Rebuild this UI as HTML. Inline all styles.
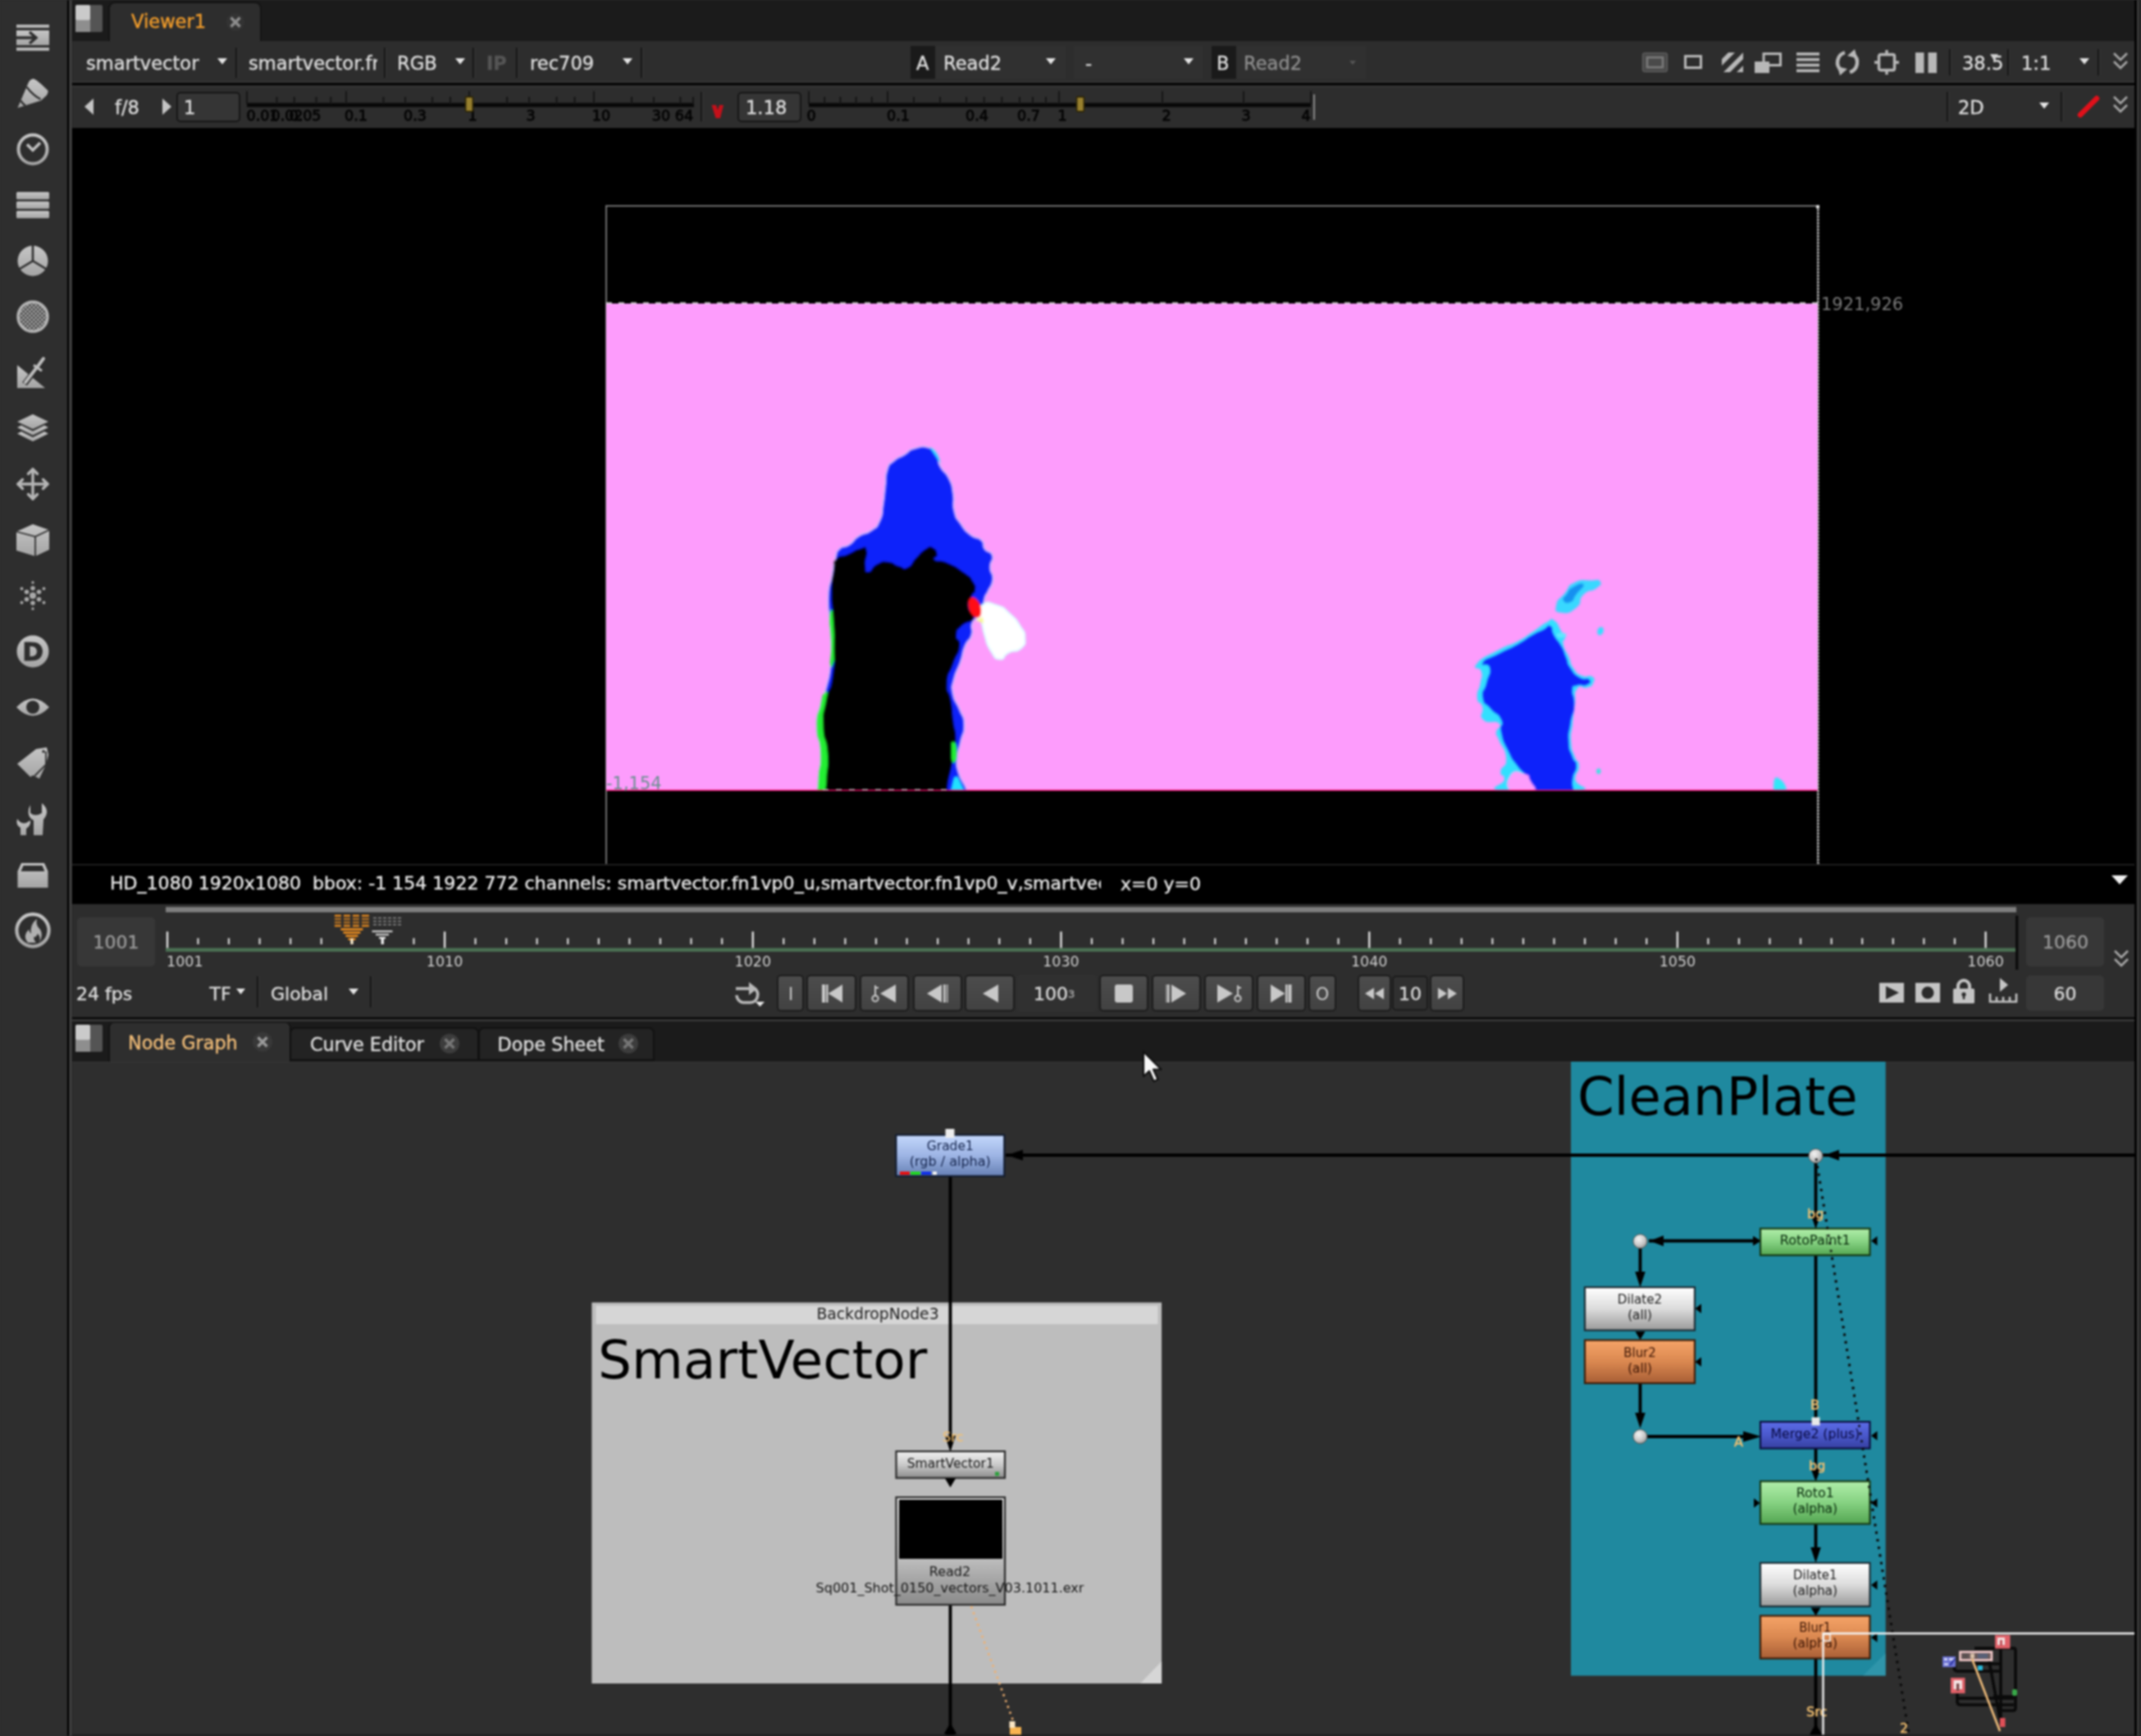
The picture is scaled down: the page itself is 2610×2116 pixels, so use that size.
<!DOCTYPE html>
<html>
<head>
<meta charset="utf-8">
<title>Nuke</title>
<style>
html,body{margin:0;padding:0;background:#2e2e2e;}
body{width:2610px;height:2116px;overflow:hidden;position:relative;font-family:"DejaVu Sans","Liberation Sans",sans-serif;font-size:22px;color:#dcdcdc;}
#root{position:absolute;left:0;top:0;width:2610px;height:2116px;overflow:hidden;background:transparent;filter:blur(0.8px);}
.abs{position:absolute;}
.t{position:absolute;white-space:nowrap;line-height:1;-webkit-text-stroke:0.4px currentColor;}
svg{position:absolute;overflow:visible;}
/* left toolbar */
#ltb{left:0;top:0;width:82px;height:2116px;background:#2e2e2e;}
#lsep{left:81.8px;top:0;width:2.2px;height:2116px;background:#000;}
#lsep2{left:84.6px;top:0;width:2px;height:2116px;background:#444;}
/* viewer panel */
#vtabbar{left:88px;top:0;width:2514px;height:50px;background:#1b1b1b;}
#vtab{left:134px;top:4px;width:183px;height:48px;background:#2d2d2d;border-radius:6px 6px 0 0;box-shadow:0 0 0 2px #141414;}
#row1{left:88px;top:49.5px;width:2514px;height:52px;background:#2d2d2d;}
#rowsep{left:88px;top:101px;width:2514px;height:2.7px;background:#030303;box-shadow:0 -2.5px 0 #333,0 2.5px 0 #343434;z-index:1;}
#row2{left:88px;top:104px;width:2514px;height:52px;background:#2d2d2d;}
#viewer{left:88px;top:156px;width:2514px;height:897px;background:#000;}
#status{left:88px;top:1053px;width:2514px;height:49px;background:#000;border-top:2px solid #1e1e1e;box-sizing:border-box;}
#tl{left:88px;top:1102px;width:2514px;height:138px;background:#2d2d2d;}
#tlsep{left:88px;top:1239.6px;width:2514px;height:2.8px;background:#020202;box-shadow:0 2.6px 0 #3a3a3a;}
/* node graph panel */
#ntabbar{left:88px;top:1245px;width:2514px;height:49px;background:#1b1b1b;}
#ng{left:88px;top:1294px;width:2514px;height:822px;background:#2e2e2e;overflow:hidden;border-top:1.5px solid #363636;box-sizing:border-box;}
#rstrip{left:2602.4px;top:0;width:8px;height:2116px;background:linear-gradient(90deg,#020202 0,#020202 2.6px,#404040 2.6px,#404040 5.2px,#262626 5.2px);}
.vsep{position:absolute;width:2px;background:#151515;box-shadow:1px 0 0 #3a3a3a;}
</style>
</head>
<body>
<div id="root">
<div id="ltb" class="abs"></div>
<div id="lsep" class="abs"></div>
<div id="lsep2" class="abs"></div>
<div id="vtabbar" class="abs"></div>
<div id="vtab" class="abs"></div>
<div id="row1" class="abs"></div>
<div id="rowsep" class="abs"></div>
<div id="row2" class="abs"></div>
<div id="viewer" class="abs"></div>
<div id="status" class="abs"></div>
<div id="tl" class="abs"></div>
<div id="tlsep" class="abs"></div>
<div id="ntabbar" class="abs"></div>
<div id="ng" class="abs"></div>
<div id="rstrip" class="abs"></div>
<!--LEFTICONS-->
<svg width="0" height="0" style="position:absolute"><defs>
<linearGradient id="ig" x1="0" y1="0" x2="0" y2="1"><stop offset="0" stop-color="#c6c6c6"/><stop offset="1" stop-color="#a4a4a4"/></linearGradient>
<pattern id="chk" width="5" height="5" patternUnits="userSpaceOnUse"><rect width="5" height="5" fill="#b0b0b0"/><rect width="2.5" height="2.5" fill="#3c3c3c"/><rect x="2.5" y="2.5" width="2.5" height="2.5" fill="#3c3c3c"/></pattern>
</defs></svg>
<!-- 1 Image -->
<svg style="left:20px;top:26px" width="40" height="40" viewBox="0 0 40 40"><g fill="url(#ig)"><rect x="0" y="4" width="40" height="4"/><rect x="0" y="11" width="40" height="18"/><rect x="0" y="32" width="40" height="4"/></g><path d="M0 20 H22 M16 13 L24 20 L16 27" fill="none" stroke="#2e2e2e" stroke-width="3.4"/></svg>
<!-- 2 Draw -->
<svg style="left:20px;top:94px" width="40" height="40" viewBox="0 0 40 40"><path d="M1.5 37.5 L15 6 Q17 2.5 20.5 2 Q24 2 38.5 16.5 Q39 19.5 37 22 L30 28.5 Z" fill="url(#ig)"/><path d="M12.5 12 Q20 22 29.5 27 M5.5 28.5 Q7 32.5 11 34.5" fill="none" stroke="#2e2e2e" stroke-width="2.2"/></svg>
<!-- 3 Time -->
<svg style="left:20px;top:162px" width="40" height="40" viewBox="0 0 40 40"><circle cx="20" cy="20" r="17.5" fill="none" stroke="url(#ig)" stroke-width="4"/><path d="M13 14 L20 21 L29 12" fill="none" stroke="#c0c0c0" stroke-width="3.6"/></svg>
<!-- 4 Channel -->
<svg style="left:20px;top:230px" width="40" height="40" viewBox="0 0 40 40"><g fill="url(#ig)"><rect x="0" y="4" width="40" height="9" rx="1.5"/><rect x="0" y="15.5" width="40" height="9" rx="1.5"/><rect x="0" y="27" width="40" height="9" rx="1.5"/></g></svg>
<!-- 5 Color -->
<svg style="left:20px;top:298px" width="40" height="40" viewBox="0 0 40 40"><circle cx="20" cy="20" r="18.5" fill="url(#ig)"/><path d="M20 1 V20 L3.5 30 M20 20 L36.5 30" fill="none" stroke="#2e2e2e" stroke-width="2.6"/></svg>
<!-- 6 Filter -->
<svg style="left:20px;top:366px" width="40" height="40" viewBox="0 0 40 40"><circle cx="20" cy="20" r="18" fill="url(#chk)" stroke="#b4b4b4" stroke-width="3.4"/></svg>
<!-- 7 Keyer -->
<svg style="left:20px;top:436px" width="40" height="40" viewBox="0 0 40 40"><path d="M1 9 L35 37 H1 Z" fill="url(#ig)"/><path d="M10 32 L28 8" stroke="#2e2e2e" stroke-width="7" fill="none"/><path d="M11 30 L24 13 M25 12 L33 1" stroke="#bdbdbd" stroke-width="4" stroke-linecap="round" fill="none"/><path d="M21 9 L31 16" stroke="#bdbdbd" stroke-width="3" fill="none"/></svg>
<!-- 8 Merge -->
<svg style="left:20px;top:502px" width="40" height="40" viewBox="0 0 40 40"><g fill="url(#ig)"><path d="M20 3 L39 12 L20 21 L1 12 Z"/><path d="M1 19 L6 16.5 L20 23.5 L34 16.5 L39 19 L20 28.5 Z"/><path d="M1 26.5 L6 24 L20 31 L34 24 L39 26.5 L20 36 Z"/></g></svg>
<!-- 9 Transform -->
<svg style="left:20px;top:570px" width="40" height="40" viewBox="0 0 40 40"><g fill="none" stroke="#b6b6b6" stroke-width="3.4" stroke-linecap="round" stroke-linejoin="round"><path d="M20 2 V38 M2 20 H38"/><path d="M14.5 7.5 L20 2 L25.5 7.5 M14.5 32.5 L20 38 L25.5 32.5 M7.5 14.5 L2 20 L7.5 25.5 M32.5 14.5 L38 20 L32.5 25.5"/></g></svg>
<!-- 10 3D -->
<svg style="left:20px;top:638px" width="40" height="40" viewBox="0 0 40 40"><path d="M20 1 L40 8 V32 L23 40 L0 33 V10 Z" fill="url(#ig)"/><path d="M0 10 L23 16 L40 8 M23 16 V40" fill="none" stroke="#2e2e2e" stroke-width="1.8"/></svg>
<!-- 11 Particles -->
<svg style="left:20px;top:706px" width="40" height="40" viewBox="0 0 40 40"><g fill="#a9a9a9"><circle cx="20" cy="20" r="4"/><circle cx="20" cy="11" r="2.8"/><circle cx="20" cy="29" r="2.8"/><circle cx="12.5" cy="15.5" r="2.8"/><circle cx="27.5" cy="15.5" r="2.8"/><circle cx="12.5" cy="24.5" r="2.8"/><circle cx="27.5" cy="24.5" r="2.8"/><circle cx="20" cy="4" r="1.7"/><circle cx="20" cy="36" r="1.7"/><circle cx="6.5" cy="11.5" r="1.9"/><circle cx="33.5" cy="11.5" r="1.9"/><circle cx="6.5" cy="28.5" r="1.9"/><circle cx="33.5" cy="28.5" r="1.9"/></g></svg>
<!-- 12 Deep -->
<svg style="left:20px;top:774px" width="40" height="40" viewBox="0 0 40 40"><circle cx="20" cy="20" r="19.5" fill="url(#ig)"/><text x="20" y="31" text-anchor="middle" font-family="DejaVu Sans, Liberation Sans, sans-serif" font-weight="bold" font-size="31" fill="#2e2e2e" stroke="#2e2e2e" stroke-width="1">D</text></svg>
<!-- 13 Views -->
<svg style="left:20px;top:842px" width="40" height="40" viewBox="0 0 40 40"><path d="M0 20 Q20 -1 40 20 Q20 41 0 20 Z" fill="url(#ig)"/><circle cx="20" cy="20" r="8" fill="#2e2e2e"/></svg>
<!-- 14 MetaData -->
<svg style="left:20px;top:910px" width="40" height="40" viewBox="0 0 40 40"><path d="M1 21 L24 3 L37 1 L39 10 L36 22 L28 39 L20 35 L17 37 Z" fill="url(#ig)"/><path d="M36 6 L36 22 L22 36" fill="none" stroke="#2e2e2e" stroke-width="1.8"/><circle cx="33" cy="6" r="1.8" fill="#2e2e2e"/></svg>
<!-- 15 ToolSets -->
<svg style="left:20px;top:978px" width="40" height="40" viewBox="0 0 40 40"><g fill="url(#ig)"><path d="M21 40 V22 Q13 18 15 8 L17 3 V13 Q23 18 31 13 V1 Q42 10 33 21 L32 40 Z"/><path d="M5 40 V31 Q-1 28 1 20 Q5 27 12 25 L17 22 Q18 28 12 32 V40 Z"/></g></svg>
<!-- 16 Other -->
<svg style="left:20px;top:1046px" width="40" height="40" viewBox="0 0 40 40"><path d="M6 6 H34 L38.5 16 V36 H1.5 V16 Z" fill="url(#ig)"/><path d="M8.5 9 H31.5 L34.5 16 H5.5 Z" fill="#2e2e2e"/></svg>
<!-- 17 Furnace -->
<svg style="left:17px;top:1111px" width="46" height="46" viewBox="0 0 46 46"><circle cx="23" cy="23" r="19.6" fill="none" stroke="url(#ig)" stroke-width="4.2"/><path d="M17 38 Q10 30 18 22 Q19 26 21 27 Q19 16 28 9 Q26 17 32 22 Q36 28 31 38 Q33 31 29 27 Q27 32 24 31 Q24 35 27 38 Z" fill="#b0b0b0"/></svg>
<!--/LEFTICONS-->
<!--VIEWERTOP-->
<svg style="left:92px;top:6px" width="33" height="33" viewBox="0 0 33 33"><rect width="33" height="33" rx="2" fill="#545454"/><rect width="18" height="19" rx="2" fill="#cacaca"/><rect y="18.5" width="18" height="14.5" fill="#8e8e8e"/></svg>
<div class="t" style="left:160px;top:15.2px;font-size:22.6px;color:#f09c2c;">Viewer1</div>
<svg style="left:276px;top:16px" width="22" height="22" viewBox="0 0 22 22"><circle cx="11" cy="11" r="11" fill="#333"/><path d="M5.5 5.5 L16.5 16.5 M16.5 5.5 L5.5 16.5" stroke="#8e8e8e" stroke-width="3.4"/></svg>
<div class="t" style="left:105px;top:65.7px;font-size:22.6px;color:#dcdcdc;">smartvector</div>
<svg style="left:265.0px;top:71.25px" width="12" height="7.5" viewBox="0 0 12 7.5"><path d="M0 0 H12 L6.0 7.5 Z" fill="#e4e4e4"/></svg>
<div class="vsep" style="left:287px;top:58px;height:37px"></div>
<div class="abs" style="left:303px;top:60px;width:157px;height:32px;overflow:hidden"><div class="t" style="left:0;top:5.6px;font-size:22.6px">smartvector.fn1vp0</div></div>
<div class="vsep" style="left:468px;top:58px;height:37px"></div>
<div class="t" style="left:484px;top:65.7px;font-size:22.6px;color:#dcdcdc;">RGB</div>
<svg style="left:555.0px;top:71.25px" width="12" height="7.5" viewBox="0 0 12 7.5"><path d="M0 0 H12 L6.0 7.5 Z" fill="#e4e4e4"/></svg>
<div class="vsep" style="left:576px;top:58px;height:37px"></div>
<div class="t" style="left:593px;top:65.8px;font-size:22.3px;color:#555;font-weight:bold">IP</div>
<div class="vsep" style="left:629px;top:58px;height:37px"></div>
<div class="t" style="left:646px;top:65.7px;font-size:22.6px;color:#dcdcdc;">rec709</div>
<svg style="left:759.0px;top:71.25px" width="12" height="7.5" viewBox="0 0 12 7.5"><path d="M0 0 H12 L6.0 7.5 Z" fill="#e4e4e4"/></svg>
<div class="vsep" style="left:781px;top:58px;height:37px"></div>
<div class="abs" style="left:1110px;top:56px;width:189px;height:40px;background:#303030"></div>
<div class="abs" style="left:1110px;top:56px;width:30px;height:40px;background:#1a1a1a"></div>
<div class="t" style="left:1117px;top:65.7px;font-size:22.6px;color:#dcdcdc;">A</div>
<div class="t" style="left:1150px;top:65.7px;font-size:22.6px;color:#dcdcdc;">Read2</div>
<svg style="left:1275.0px;top:71.25px" width="12" height="7.5" viewBox="0 0 12 7.5"><path d="M0 0 H12 L6.0 7.5 Z" fill="#e4e4e4"/></svg>
<div class="abs" style="left:1309px;top:56px;width:157px;height:40px;background:#303030"></div>
<div class="t" style="left:1323px;top:65.7px;font-size:22.6px;color:#dcdcdc;">-</div>
<svg style="left:1443.0px;top:71.25px" width="12" height="7.5" viewBox="0 0 12 7.5"><path d="M0 0 H12 L6.0 7.5 Z" fill="#e4e4e4"/></svg>
<div class="abs" style="left:1477px;top:56px;width:188px;height:40px;background:#303030"></div>
<div class="abs" style="left:1477px;top:56px;width:30px;height:40px;background:#1a1a1a"></div>
<div class="t" style="left:1483px;top:65.7px;font-size:22.6px;color:#dcdcdc;">B</div>
<div class="t" style="left:1516px;top:65.7px;font-size:22.6px;color:#8c8c8c;">Read2</div>
<svg style="left:1645.0px;top:73.5px" width="8" height="5" viewBox="0 0 8 5"><path d="M0 0 H8 L4.0 5 Z" fill="#555"/></svg>
<svg style="left:2002px;top:64px" width="31" height="24" viewBox="0 0 31 24"><rect x="0.5" y="0.5" width="30" height="23" rx="2" fill="#4a4a4a" stroke="#666"/><rect x="6" y="6" width="19" height="12" fill="none" stroke="#7a7a7a" stroke-width="2.6"/></svg>
<svg style="left:2053px;top:67px" width="22" height="17" viewBox="0 0 22 17"><rect x="1.5" y="1.5" width="19" height="14" fill="none" stroke="#b8b8b8" stroke-width="3"/></svg>
<svg style="left:2099px;top:64px" width="26" height="24" viewBox="0 0 26 24"><g fill="#b8b8b8"><path d="M0 8 L8 0 H16 L0 16 Z"/><path d="M2 24 L26 0 V8 L10 24 Z"/><path d="M18 24 L26 16 V24 Z"/></g></svg>
<svg style="left:2139px;top:64px" width="33" height="25" viewBox="0 0 33 25"><rect x="11" y="1.5" width="20.5" height="14" fill="none" stroke="#b8b8b8" stroke-width="3"/><rect x="0" y="11" width="18" height="14" fill="#b8b8b8"/></svg>
<svg style="left:2190px;top:64px" width="28" height="24" viewBox="0 0 28 24"><g fill="#b8b8b8"><rect y="0" width="28" height="3.6"/><rect y="6.8" width="28" height="3.6"/><rect y="13.6" width="28" height="3.6"/><rect y="20.4" width="28" height="3.6"/></g></svg>
<svg style="left:2236px;top:60px" width="32" height="32" viewBox="0 0 32 32"><g fill="none" stroke="#b8b8b8" stroke-width="4.4"><path d="M13 4 A12.5 12.5 0 0 0 9 26"/><path d="M19 28 A12.5 12.5 0 0 0 23 6"/></g><path d="M4 21 L16 24 L7 32 Z M28 11 L16 8 L25 0 Z" fill="#b8b8b8"/></svg>
<svg style="left:2285px;top:61px" width="30" height="30" viewBox="0 0 30 30"><rect x="5.5" y="5.5" width="19" height="19" rx="2" fill="none" stroke="#b8b8b8" stroke-width="3.4"/><path d="M15 0 V5 M15 25 V30 M0 15 H5 M25 15 H30" stroke="#b8b8b8" stroke-width="3.4"/></svg>
<svg style="left:2335px;top:64px" width="26" height="25" viewBox="0 0 26 25"><rect x="0" y="0" width="10.5" height="25" fill="#b8b8b8"/><rect x="15.5" y="0" width="10.5" height="25" fill="#b8b8b8"/></svg>
<div class="vsep" style="left:2376px;top:60px;height:32px"></div>
<div class="t" style="left:2392px;top:65.7px;font-size:22.6px;color:#dcdcdc;">38.5</div>
<svg style="left:2426px;top:66px" width="10" height="8" viewBox="0 0 10 8"><path d="M0 0 H10 L5 8 Z" fill="#cfcfcf"/></svg>
<div class="vsep" style="left:2447px;top:60px;height:32px"></div>
<div class="t" style="left:2464px;top:65.7px;font-size:22.6px;color:#dcdcdc;">1:1</div>
<svg style="left:2535.0px;top:71.25px" width="12" height="7.5" viewBox="0 0 12 7.5"><path d="M0 0 H12 L6.0 7.5 Z" fill="#e4e4e4"/></svg>
<div class="vsep" style="left:2557px;top:60px;height:32px"></div>
<svg style="left:2576px;top:64px" width="18" height="22" viewBox="0 0 18 22"><path d="M1 1 L9 9 L17 1 M1 11 L9 19 L17 11" fill="none" stroke="#a8a8a8" stroke-width="2.6"/></svg>
<svg style="left:103px;top:120px" width="11" height="20" viewBox="0 0 11 20"><path d="M11 0 V20 L0 10 Z" fill="#c4c4c4"/></svg>
<div class="t" style="left:140px;top:119.7px;font-size:22.6px;color:#dcdcdc;">f/8</div>
<svg style="left:198px;top:120px" width="11" height="20" viewBox="0 0 11 20"><path d="M0 0 V20 L11 10 Z" fill="#c4c4c4"/></svg>
<div class="abs" style="left:215px;top:112px;width:78px;height:37px;background:#353535;border:2px solid #161616;border-radius:5px;box-sizing:border-box"></div>
<div class="t" style="left:224px;top:119.7px;font-size:22.6px;color:#dcdcdc;">1</div>
<svg style="left:0;top:0" width="2610" height="170" viewBox="0 0 2610 170"><rect x="301" y="125.5" width="545" height="5" fill="#080808"/><rect x="300.0" y="111" width="2" height="16" fill="#151515"/><rect x="421.0" y="111" width="2" height="16" fill="#151515"/><rect x="571.0" y="111" width="2" height="16" fill="#151515"/><rect x="723.0" y="111" width="2" height="16" fill="#151515"/><rect x="336.4246294753417" y="118" width="2" height="9" fill="#151515"/><rect x="357.73167182107915" y="118" width="2" height="9" fill="#151515"/><rect x="384.5753705246583" y="118" width="2" height="9" fill="#151515"/><rect x="402.2568628417251" y="118" width="2" height="9" fill="#151515"/><rect x="466.42694225714496" y="118" width="2" height="9" fill="#151515"/><rect x="493.0" y="118" width="2" height="9" fill="#151515"/><rect x="526.0941018855112" y="118" width="2" height="9" fill="#151515"/><rect x="547.8926295284577" y="118" width="2" height="9" fill="#151515"/><rect x="617.0578720107164" y="118" width="2" height="9" fill="#151515"/><rect x="644.0" y="118" width="2" height="9" fill="#151515"/><rect x="677.5183852430179" y="118" width="2" height="9" fill="#151515"/><rect x="699.5963811890789" y="118" width="2" height="9" fill="#151515"/><rect x="769.0578720107164" y="118" width="2" height="9" fill="#151515"/><rect x="796.0" y="118" width="2" height="9" fill="#151515"/><rect x="828.3612150603262" y="118" width="2" height="9" fill="#151515"/><rect x="844.0" y="118" width="2" height="9" fill="#151515"/><text x="320" y="146.5" font-size="17.5" fill="#050505" stroke="#050505" stroke-width="0.9" text-anchor="middle" font-family="DejaVu Sans, Liberation Sans, sans-serif">0.01</text><text x="350" y="146.5" font-size="17.5" fill="#050505" stroke="#050505" stroke-width="0.9" text-anchor="middle" font-family="DejaVu Sans, Liberation Sans, sans-serif">0.02</text><text x="372" y="146.5" font-size="17.5" fill="#050505" stroke="#050505" stroke-width="0.9" text-anchor="middle" font-family="DejaVu Sans, Liberation Sans, sans-serif">0.05</text><text x="434" y="146.5" font-size="17.5" fill="#050505" stroke="#050505" stroke-width="0.9" text-anchor="middle" font-family="DejaVu Sans, Liberation Sans, sans-serif">0.1</text><text x="506" y="146.5" font-size="17.5" fill="#050505" stroke="#050505" stroke-width="0.9" text-anchor="middle" font-family="DejaVu Sans, Liberation Sans, sans-serif">0.3</text><text x="576" y="146.5" font-size="17.5" fill="#050505" stroke="#050505" stroke-width="0.9" text-anchor="middle" font-family="DejaVu Sans, Liberation Sans, sans-serif">1</text><text x="647" y="146.5" font-size="17.5" fill="#050505" stroke="#050505" stroke-width="0.9" text-anchor="middle" font-family="DejaVu Sans, Liberation Sans, sans-serif">3</text><text x="733" y="146.5" font-size="17.5" fill="#050505" stroke="#050505" stroke-width="0.9" text-anchor="middle" font-family="DejaVu Sans, Liberation Sans, sans-serif">10</text><text x="806" y="146.5" font-size="17.5" fill="#050505" stroke="#050505" stroke-width="0.9" text-anchor="middle" font-family="DejaVu Sans, Liberation Sans, sans-serif">30</text><text x="834" y="146.5" font-size="17.5" fill="#050505" stroke="#050505" stroke-width="0.9" text-anchor="middle" font-family="DejaVu Sans, Liberation Sans, sans-serif">64</text><rect x="567.5" y="118" width="9" height="18" rx="1.5" fill="#98802e" stroke="#2e2608" stroke-width="1.8"/></svg>
<div class="vsep" style="left:854px;top:112px;height:36px"></div>
<svg style="left:867px;top:127px" width="16" height="18" viewBox="0 0 16 18"><path d="M0.5 1 L6 1 L8 7 L10 1 L15 1 L11 17 L5.5 17 Z" fill="#c4101a"/></svg>
<div class="abs" style="left:899px;top:112px;width:78px;height:37px;background:#353535;border:2px solid #161616;border-radius:5px;box-sizing:border-box"></div>
<div class="t" style="left:909px;top:119.7px;font-size:22.6px;color:#dcdcdc;">1.18</div>
<svg style="left:0;top:0" width="2610" height="170" viewBox="0 0 2610 170"><rect x="986" y="125.5" width="612" height="5" fill="#080808"/><rect x="985.0" y="111" width="2" height="16" fill="#151515"/><rect x="1081.0" y="111" width="2" height="16" fill="#151515"/><rect x="1290.0" y="111" width="2" height="16" fill="#151515"/><rect x="1416.0" y="111" width="2" height="16" fill="#151515"/><rect x="1515.0" y="111" width="2" height="16" fill="#151515"/><rect x="1597.0" y="111" width="2" height="16" fill="#151515"/><rect x="1004.2" y="118" width="2" height="9" fill="#151515"/><rect x="1023.4000000000001" y="118" width="2" height="9" fill="#151515"/><rect x="1042.6" y="118" width="2" height="9" fill="#151515"/><rect x="1061.8" y="118" width="2" height="9" fill="#151515"/><rect x="1113.0" y="118" width="2" height="9" fill="#151515"/><rect x="1145.0" y="118" width="2" height="9" fill="#151515"/><rect x="1177.0" y="118" width="2" height="9" fill="#151515"/><rect x="1198.6666666666667" y="118" width="2" height="9" fill="#151515"/><rect x="1220.3333333333333" y="118" width="2" height="9" fill="#151515"/><rect x="1242.0" y="118" width="2" height="9" fill="#151515"/><rect x="1258.0" y="118" width="2" height="9" fill="#151515"/><rect x="1274.0" y="118" width="2" height="9" fill="#151515"/><text x="989" y="146.5" font-size="17.5" fill="#050505" stroke="#050505" stroke-width="0.9" text-anchor="middle" font-family="DejaVu Sans, Liberation Sans, sans-serif">0</text><text x="1095" y="146.5" font-size="17.5" fill="#050505" stroke="#050505" stroke-width="0.9" text-anchor="middle" font-family="DejaVu Sans, Liberation Sans, sans-serif">0.1</text><text x="1191" y="146.5" font-size="17.5" fill="#050505" stroke="#050505" stroke-width="0.9" text-anchor="middle" font-family="DejaVu Sans, Liberation Sans, sans-serif">0.4</text><text x="1254" y="146.5" font-size="17.5" fill="#050505" stroke="#050505" stroke-width="0.9" text-anchor="middle" font-family="DejaVu Sans, Liberation Sans, sans-serif">0.7</text><text x="1295" y="146.5" font-size="17.5" fill="#050505" stroke="#050505" stroke-width="0.9" text-anchor="middle" font-family="DejaVu Sans, Liberation Sans, sans-serif">1</text><text x="1422" y="146.5" font-size="17.5" fill="#050505" stroke="#050505" stroke-width="0.9" text-anchor="middle" font-family="DejaVu Sans, Liberation Sans, sans-serif">2</text><text x="1519" y="146.5" font-size="17.5" fill="#050505" stroke="#050505" stroke-width="0.9" text-anchor="middle" font-family="DejaVu Sans, Liberation Sans, sans-serif">3</text><text x="1592" y="146.5" font-size="17.5" fill="#050505" stroke="#050505" stroke-width="0.9" text-anchor="middle" font-family="DejaVu Sans, Liberation Sans, sans-serif">4</text><rect x="1312.5" y="118" width="9" height="18" rx="1.5" fill="#98802e" stroke="#2e2608" stroke-width="1.8"/><rect x="1601" y="115" width="2" height="31" fill="#8a8a8a"/></svg>
<div class="vsep" style="left:2373px;top:112px;height:36px"></div>
<div class="t" style="left:2387px;top:119.7px;font-size:22.6px;color:#dcdcdc;">2D</div>
<svg style="left:2486.0px;top:125.25px" width="12" height="7.5" viewBox="0 0 12 7.5"><path d="M0 0 H12 L6.0 7.5 Z" fill="#e4e4e4"/></svg>
<div class="vsep" style="left:2512px;top:112px;height:36px"></div>
<svg style="left:2533px;top:117px" width="26" height="26" viewBox="0 0 26 26"><path d="M3 23 L23 3" stroke="#e0101a" stroke-width="6.5" stroke-linecap="round"/></svg>
<svg style="left:2576px;top:117px" width="18" height="22" viewBox="0 0 18 22"><path d="M1 1 L9 9 L17 1 M1 11 L9 19 L17 11" fill="none" stroke="#a8a8a8" stroke-width="2.6"/></svg>
<!--/VIEWERTOP-->
<!--VIEWERIMG-->
<svg style="left:0;top:0;overflow:hidden" width="2610" height="1053" viewBox="0 0 2610 1053"><defs><filter id="bl" x="-5%" y="-5%" width="110%" height="110%"><feGaussianBlur stdDeviation="1.2"/></filter><filter id="bl2"><feGaussianBlur stdDeviation="2.6"/></filter><clipPath id="pk"><rect x="739" y="370" width="1477" height="593.5"/></clipPath></defs><rect x="739" y="251" width="1477" height="900" fill="none" stroke="#707070" stroke-width="2"/><rect x="739" y="370" width="1477" height="593.5" fill="#fd9cfc"/><g clip-path="url(#pk)"><g filter="url(#bl)"><path d="M1114.6 546.6 C1124.8 543.9 1123.8 543.0 1133.1 545.9 C1142.4 548.8 1138.0 547.7 1142.4 555.2 C1146.8 562.7 1141.5 559.1 1146.4 568.4 C1151.3 577.7 1151.7 571.9 1157.0 583.0 C1162.3 594.1 1160.1 588.3 1162.3 601.6 C1164.5 614.9 1160.5 610.4 1163.6 622.8 C1166.7 635.2 1165.0 629.0 1171.6 638.7 C1178.2 648.4 1175.1 645.3 1183.5 651.9 C1191.9 658.5 1191.0 652.8 1196.7 658.5 C1202.4 664.2 1196.3 662.9 1200.7 669.1 C1205.1 675.3 1207.8 669.6 1210.0 677.1 C1212.2 684.6 1207.1 682.0 1207.3 691.7 C1207.5 701.4 1211.5 696.6 1210.6 706.3 C1209.7 716.0 1208.0 713.3 1204.7 720.8 C1201.4 728.3 1203.5 719.8 1200.7 728.8 C1197.9 737.8 1201.4 738.0 1196.4 747.9 C1191.4 757.8 1189.8 749.7 1185.8 758.5 C1181.8 767.3 1187.6 764.7 1184.5 774.4 C1181.4 784.1 1181.0 777.0 1176.6 787.6 C1172.2 798.2 1175.7 792.9 1171.3 806.2 C1166.9 819.5 1166.4 814.2 1163.3 827.4 C1160.2 840.6 1159.8 833.5 1162.0 845.9 C1164.2 858.3 1165.3 852.1 1169.9 864.5 C1174.5 876.9 1175.3 869.8 1175.8 883.0 C1176.3 896.2 1174.1 890.9 1171.3 904.2 C1168.5 917.5 1168.2 910.4 1167.3 922.8 C1166.4 935.2 1165.1 928.5 1168.6 941.3 C1172.1 954.1 1174.8 952.3 1177.9 961.2 C1181.0 970.1 1180.6 962.4 1178.0 968.0 C1175.4 973.6 1199.3 974.0 1170.0 978.0 C1140.7 982.0 1145.0 980.0 1090.0 980.0 C1035.0 980.0 1035.8 982.0 1005.0 978.0 C974.2 974.0 1000.1 977.3 997.7 968.0 C995.3 958.7 996.8 966.8 997.7 950.0 C998.6 933.2 1001.0 938.9 1000.3 917.5 C999.6 896.1 995.6 905.1 995.6 885.7 C995.6 866.3 996.5 875.1 1000.3 859.2 C1004.1 843.3 1003.0 853.9 1007.0 838.0 C1011.0 822.1 1010.3 829.2 1012.3 811.5 C1014.3 793.8 1013.4 802.7 1013.1 785.0 C1012.8 767.3 1012.7 777.9 1011.5 758.5 C1010.3 739.1 1008.8 745.4 1009.6 726.7 C1010.4 708.0 1011.2 717.1 1013.9 702.3 C1016.6 687.5 1014.7 693.5 1017.8 682.4 C1020.9 671.3 1017.4 675.3 1023.1 669.1 C1028.8 662.9 1027.0 669.1 1035.0 663.8 C1043.0 658.5 1038.1 658.9 1047.0 653.2 C1055.9 647.5 1053.2 652.8 1061.6 646.6 C1070.0 640.4 1067.4 644.9 1072.2 634.7 C1077.0 624.5 1073.9 629.8 1076.1 616.1 C1078.3 602.4 1077.0 608.2 1078.8 593.6 C1080.6 579.0 1077.9 583.0 1081.4 572.4 C1084.9 561.8 1082.3 568.0 1089.4 561.8 C1096.5 555.6 1094.2 559.0 1102.6 553.9 C1111.0 548.8 1104.4 549.3 1114.6 546.6 Z" fill="#0a22fa" stroke="#d6c2ff" stroke-width="1.5"/><path d="M997.7 975.0 C993.9 966.7 996.8 969.2 997.7 950.0 C998.6 930.8 1001.0 938.9 1000.3 917.5 C999.6 896.1 995.6 905.1 995.6 885.7 C995.6 866.3 997.2 872.8 1000.3 859.2 C1003.4 845.6 1002.1 847.4 1005.0 845.0 C1007.9 842.6 1009.0 838.4 1009.0 852.0 C1009.0 865.6 1004.7 863.9 1005.0 885.7 C1005.3 907.5 1008.7 896.1 1010.0 917.5 C1011.3 938.9 1009.3 930.8 1009.0 950.0 C1008.7 969.2 1012.8 966.7 1009.0 975.0 C1005.2 983.3 1001.5 983.3 997.7 975.0 Z" fill="#20f030"/><path d="M1011.5 750.0 C1010.2 760.7 1012.8 764.5 1013.1 785.0 C1013.4 805.5 1010.7 806.5 1012.3 811.5 C1013.9 816.5 1015.9 808.8 1018.0 800.0 C1020.1 791.2 1018.8 800.7 1018.5 785.0 C1018.2 769.3 1019.3 764.7 1017.0 753.0 C1014.7 741.3 1012.8 739.3 1011.5 750.0 Z" fill="#20f030"/><path d="M1019.4 681.6 C1025.2 675.2 1024.1 680.0 1033.7 675.8 C1043.3 671.6 1040.8 670.9 1048.3 669.1 C1055.8 667.3 1054.1 663.9 1056.3 670.5 C1058.5 677.1 1054.0 680.2 1054.9 689.0 C1055.8 697.8 1054.0 697.4 1058.9 697.0 C1063.8 696.6 1061.5 691.7 1069.5 687.7 C1077.5 683.7 1074.0 684.1 1082.8 685.0 C1091.6 685.9 1088.1 688.1 1096.0 690.3 C1103.9 692.5 1099.5 695.2 1106.6 691.7 C1113.7 688.2 1109.7 687.2 1117.2 679.7 C1124.7 672.2 1122.5 673.1 1129.1 669.1 C1135.7 665.1 1132.7 665.6 1137.1 667.8 C1141.5 670.0 1141.5 670.9 1142.4 675.8 C1143.3 680.7 1135.3 678.9 1139.7 682.4 C1144.1 685.9 1143.7 681.1 1155.6 686.4 C1167.5 691.7 1165.3 690.8 1175.5 698.3 C1185.7 705.8 1181.7 701.8 1186.1 708.9 C1190.5 716.0 1189.2 713.8 1188.8 719.5 C1188.4 725.2 1187.6 719.3 1184.8 726.1 C1182.0 732.9 1179.7 731.0 1180.5 740.0 C1181.3 749.0 1189.8 745.7 1187.2 753.2 C1184.6 760.7 1179.7 755.4 1172.6 762.5 C1165.5 769.6 1166.9 766.0 1166.0 774.4 C1165.1 782.8 1171.2 776.1 1169.9 787.6 C1168.6 799.1 1167.1 793.8 1162.0 808.8 C1156.9 823.8 1155.5 817.7 1154.6 832.7 C1153.7 847.7 1156.8 838.9 1159.3 853.9 C1161.8 868.9 1160.0 860.9 1162.0 877.7 C1164.0 894.5 1165.6 886.5 1165.2 904.2 C1164.8 921.9 1163.9 913.8 1160.7 930.7 C1157.5 947.6 1157.5 942.6 1155.5 955.0 C1153.5 967.4 1157.1 960.3 1154.6 968.0 C1152.1 975.7 1172.9 974.0 1148.0 978.0 C1123.1 982.0 1124.7 980.0 1080.0 980.0 C1035.3 980.0 1038.3 982.0 1014.0 978.0 C989.7 974.0 1009.2 977.3 1007.0 968.0 C1004.8 958.7 1006.9 966.8 1007.5 950.0 C1008.1 933.2 1010.1 938.9 1008.8 917.5 C1007.5 896.1 1004.1 906.9 1003.5 885.7 C1002.9 864.5 1003.2 874.2 1007.0 853.9 C1010.8 833.6 1011.6 847.7 1014.9 824.7 C1018.2 801.7 1016.5 808.8 1016.8 785.0 C1017.1 761.2 1016.8 774.4 1015.7 753.2 C1014.6 732.0 1013.4 740.8 1013.6 721.4 C1013.8 702.0 1014.3 708.2 1016.2 694.9 C1018.1 681.6 1013.6 688.0 1019.4 681.6 Z" fill="#000"/><path d="M1163 948 Q1167 944 1169 950 L1176 965 L1159 965 Z" fill="#20e0ff"/><path d="M1160 905 Q1168 900 1166 925 Q1162 935 1160 925 Z" fill="#20f030"/><path d="M1197.7 737.3 C1205.5 732.0 1203.9 734.3 1215.0 737.8 C1226.1 741.3 1221.2 739.2 1230.9 747.9 C1240.6 756.6 1237.9 754.1 1244.1 763.8 C1250.3 773.5 1249.2 768.2 1249.4 777.0 C1249.6 785.8 1251.2 784.1 1244.6 790.3 C1238.0 796.5 1238.1 791.2 1229.5 795.6 C1220.9 800.0 1226.2 804.4 1218.9 803.5 C1211.6 802.6 1213.8 802.6 1207.6 792.9 C1201.4 783.2 1204.1 785.9 1200.4 774.4 C1196.7 762.9 1199.3 765.4 1196.4 758.5 C1193.5 751.6 1191.3 760.8 1191.7 753.7 C1192.1 746.6 1189.9 742.6 1197.7 737.3 Z" fill="#fff" stroke="#d8ffff" stroke-width="2"/><ellipse cx="1188.3" cy="740.5" rx="7.2" ry="13" transform="rotate(-18 1188.3 740.5)" fill="#ff1018"/><path d="M1190 756 L1198 752 L1199 760 Z" fill="#f8f890"/><path d="M1133 545 Q1143 548 1147 566 L1143 560 Z" fill="#30d8ff"/><path d="M1894.5 756.2 C1900.5 760.0 1899.0 763.0 1903.5 769.7 C1908.0 776.4 1907.2 771.2 1908.0 776.4 C1908.7 781.6 1904.2 777.2 1905.7 785.4 C1907.2 793.6 1908.4 791.4 1912.5 801.1 C1916.6 810.8 1912.8 807.1 1918.1 814.5 C1923.3 822.0 1920.7 820.1 1928.2 823.5 C1935.6 826.9 1935.9 821.6 1940.5 824.6 C1945.1 827.6 1943.9 828.0 1942.1 832.5 C1940.2 837.0 1941.4 835.7 1934.9 838.1 C1928.4 840.5 1927.6 832.5 1922.6 839.6 C1917.5 846.7 1921.5 845.3 1919.6 859.4 C1917.8 873.4 1918.4 866.8 1917.0 881.8 C1915.5 896.7 1914.3 890.8 1915.2 904.2 C1916.1 917.7 1916.4 912.4 1919.6 922.2 C1922.9 931.9 1924.6 924.4 1924.8 933.4 C1925.0 942.3 1921.8 938.2 1920.3 949.1 C1918.8 959.9 1949.1 960.3 1920.3 965.9 C1891.5 971.5 1862.8 971.5 1834.0 965.9 C1805.2 960.3 1835.5 957.7 1834.0 949.1 C1832.5 940.5 1828.8 948.3 1829.5 940.1 C1830.3 931.9 1837.0 937.1 1836.2 924.4 C1835.5 911.7 1831.4 912.4 1827.3 902.0 C1823.2 891.5 1823.9 899.7 1823.9 893.0 C1823.9 886.3 1832.5 887.0 1827.3 881.8 C1822.0 876.6 1814.9 884.0 1808.2 877.3 C1801.5 870.6 1809.6 870.6 1807.1 861.6 C1804.6 852.6 1801.6 860.1 1800.8 850.4 C1800.1 840.7 1803.1 842.9 1804.8 832.5 C1806.6 822.0 1807.5 826.9 1806.0 819.0 C1804.5 811.2 1793.3 817.9 1800.4 808.9 C1807.5 800.0 1810.8 801.1 1827.3 792.1 C1843.7 783.1 1836.2 789.1 1849.7 782.0 C1863.1 774.9 1855.7 778.7 1867.6 770.8 C1879.6 763.0 1876.6 763.3 1885.6 758.5 C1894.5 753.6 1888.6 752.5 1894.5 756.2 Z" fill="#30e0ff"/><path d="M1890.0 763.0 C1894.5 765.2 1890.0 765.9 1894.5 774.2 C1899.0 782.4 1898.6 778.7 1903.5 787.6 C1908.4 796.6 1905.4 792.1 1909.1 801.1 C1912.8 810.0 1909.1 806.3 1914.7 814.5 C1920.3 822.8 1918.4 821.3 1925.9 825.7 C1933.4 830.2 1934.1 825.0 1937.1 828.0 C1940.1 831.0 1940.1 832.1 1934.9 834.7 C1929.7 837.3 1927.4 833.6 1921.4 835.8 C1915.5 838.1 1917.7 833.6 1917.0 841.4 C1916.2 849.3 1919.9 845.9 1919.2 859.4 C1918.4 872.8 1917.0 866.8 1914.7 881.8 C1912.5 896.7 1911.7 890.8 1912.5 904.2 C1913.2 917.7 1913.8 912.4 1917.0 922.2 C1920.1 931.9 1921.7 924.4 1921.9 933.4 C1922.0 942.3 1918.7 939.2 1917.4 949.1 C1916.1 958.9 1917.8 957.4 1918.1 963.0 C1918.3 968.6 1934.1 964.9 1918.1 965.9 C1902.0 966.8 1886.1 966.8 1869.9 965.9 C1853.6 964.9 1871.5 968.6 1869.4 963.0 C1867.3 957.4 1870.2 958.9 1863.6 949.1 C1857.0 939.2 1858.1 944.6 1849.7 933.4 C1841.3 922.2 1845.1 928.9 1838.5 915.4 C1831.9 902.0 1832.8 905.7 1830.0 893.0 C1827.1 880.3 1834.2 887.0 1830.0 877.3 C1825.7 867.6 1824.6 872.8 1817.2 863.9 C1809.7 854.9 1809.3 860.9 1807.5 850.4 C1805.8 839.9 1809.2 844.4 1812.0 832.5 C1814.9 820.5 1817.5 822.8 1816.1 814.5 C1814.6 806.3 1803.8 813.8 1807.5 807.8 C1811.3 801.8 1813.2 804.1 1827.3 796.6 C1841.3 789.1 1836.2 792.9 1849.7 785.4 C1863.1 777.9 1857.2 780.1 1867.6 774.2 C1878.1 768.2 1873.6 771.2 1881.1 767.4 C1888.6 763.7 1885.6 760.7 1890.0 763.0 Z" fill="#0a22fa"/><path d="M1841.8 944.6 C1846.9 937.1 1850.8 941.2 1858.7 943.5 C1866.5 945.7 1862.0 943.8 1865.4 951.3 C1868.7 958.8 1876.1 961.0 1868.7 965.9 C1861.4 970.7 1852.4 973.0 1843.4 965.9 C1834.4 958.8 1836.8 952.0 1841.8 944.6 Z" fill="#fd9cfc"/><path d="M1919.2 710.3 C1929.7 705.2 1928.9 707.9 1939.4 707.4 C1949.8 706.8 1948.3 705.5 1950.6 708.7 C1952.8 711.9 1952.8 711.6 1946.1 717.0 C1939.4 722.4 1938.5 717.0 1930.4 724.8 C1922.3 732.7 1930.9 733.2 1921.9 740.5 C1912.9 747.9 1911.7 747.9 1903.5 746.8 C1895.3 745.7 1895.7 745.2 1897.2 737.2 C1898.7 729.1 1900.7 731.6 1908.0 722.6 C1915.3 713.6 1908.7 715.4 1919.2 710.3 Z" fill="#38d8ff"/><path d="M1917.0 715.9 C1923.7 712.1 1928.9 709.5 1930.4 712.5 C1931.9 715.5 1926.7 717.7 1921.4 724.8 C1916.2 731.9 1919.9 731.6 1914.7 733.8 C1909.5 736.1 1907.2 734.9 1905.7 731.6 C1904.2 728.2 1906.5 729.0 1910.2 723.7 C1914.0 718.5 1910.2 719.6 1917.0 715.9 Z" fill="#1890f0"/><ellipse cx="1951.0" cy="769.2" rx="3.6" ry="5.2" transform="rotate(20 1951.0 769.2)" fill="#30e0ff"/><ellipse cx="1948.8" cy="940.1" rx="2.6" ry="3.4" fill="#30e8e0"/><path d="M2162.2 965 Q2161.2 944.9 2167.2 947.9 Q2177.2 952.9 2178.2 965 Z" fill="#30e8f8"/><ellipse cx="1903.5" cy="774.2" rx="6" ry="3" fill="#60e8ff"/></g></g><rect x="739" y="962.5" width="1477" height="1.6" fill="#ff1070" opacity="0.85"/><path d="M739 369.5 H2216" stroke="#d8d8d8" stroke-width="2" stroke-dasharray="7 8" fill="none"/><path d="M1003 962.5 H1156" stroke="#b0b0b0" stroke-width="1.6" stroke-dasharray="7 9" fill="none"/><path d="M2216.5 251 V1053" stroke="#bdbdbd" stroke-width="2.4" stroke-dasharray="2 2" fill="none"/><rect x="2214" y="250" width="4" height="4" fill="#ddd"/><text x="2220" y="377.5" font-family="DejaVu Sans, Liberation Sans, sans-serif" font-size="21" fill="#7a7a7a">1921,926</text><text x="739" y="962" font-family="DejaVu Sans, Liberation Sans, sans-serif" font-size="21" fill="#6a9090">-1,154</text></svg>
<!--/VIEWERIMG-->
<!--TIMELINE-->
<div class="abs" style="left:134px;top:1060px;width:1208px;height:34px;overflow:hidden"><div class="t" style="left:0;top:5.5px;font-size:22.05px;color:#e8e8e8;white-space:pre">HD_1080 1920x1080  bbox: -1 154 1922 772 channels: smartvector.fn1vp0_u,smartvector.fn1vp0_v,smartvector.fn1vp0_w</div></div>
<div class="t" style="left:1366px;top:1066.5px;font-size:22.0px;color:#e6e6e6;">x=0 y=0</div>
<svg style="left:2574.0px;top:1067.0px" width="20" height="11" viewBox="0 0 20 11"><path d="M0 0 H20 L10.0 11 Z" fill="#f0f0f0"/></svg>
<svg style="left:0;top:1100px;overflow:hidden" width="2610" height="90" viewBox="0 1100 2610 90"><defs><pattern id="st" width="4" height="4.4" patternUnits="userSpaceOnUse"><rect width="4" height="2.4" fill="#f08a18"/></pattern><pattern id="st2" width="4" height="4.4" patternUnits="userSpaceOnUse"><rect width="4" height="2.2" fill="#b8b8b8"/></pattern></defs><rect x="202" y="1105.5" width="2256" height="6.5" fill="#7e7e7e"/><rect x="202" y="1155.5" width="2256" height="4.5" fill="#4b7053"/><rect x="202.8" y="1135.5" width="2.4" height="20" fill="#e0e0e0"/><rect x="240.3" y="1143.5" width="2.3" height="7.5" fill="#d2d2d2"/><rect x="277.8" y="1143.5" width="2.3" height="7.5" fill="#d2d2d2"/><rect x="315.4" y="1143.5" width="2.3" height="7.5" fill="#d2d2d2"/><rect x="353.0" y="1143.5" width="2.3" height="7.5" fill="#d2d2d2"/><rect x="390.6" y="1143.5" width="2.3" height="7.5" fill="#d2d2d2"/><rect x="428.1" y="1143.5" width="2.3" height="7.5" fill="#d2d2d2"/><rect x="465.7" y="1143.5" width="2.3" height="7.5" fill="#d2d2d2"/><rect x="503.3" y="1143.5" width="2.3" height="7.5" fill="#d2d2d2"/><rect x="540.9" y="1135.5" width="2.4" height="20" fill="#e0e0e0"/><rect x="578.4" y="1143.5" width="2.3" height="7.5" fill="#d2d2d2"/><rect x="616.0" y="1143.5" width="2.3" height="7.5" fill="#d2d2d2"/><rect x="653.5" y="1143.5" width="2.3" height="7.5" fill="#d2d2d2"/><rect x="691.1" y="1143.5" width="2.3" height="7.5" fill="#d2d2d2"/><rect x="728.7" y="1143.5" width="2.3" height="7.5" fill="#d2d2d2"/><rect x="766.2" y="1143.5" width="2.3" height="7.5" fill="#d2d2d2"/><rect x="803.8" y="1143.5" width="2.3" height="7.5" fill="#d2d2d2"/><rect x="841.4" y="1143.5" width="2.3" height="7.5" fill="#d2d2d2"/><rect x="879.0" y="1143.5" width="2.3" height="7.5" fill="#d2d2d2"/><rect x="916.6" y="1135.5" width="2.4" height="20" fill="#e0e0e0"/><rect x="954.1" y="1143.5" width="2.3" height="7.5" fill="#d2d2d2"/><rect x="991.7" y="1143.5" width="2.3" height="7.5" fill="#d2d2d2"/><rect x="1029.2" y="1143.5" width="2.3" height="7.5" fill="#d2d2d2"/><rect x="1066.8" y="1143.5" width="2.3" height="7.5" fill="#d2d2d2"/><rect x="1104.4" y="1143.5" width="2.3" height="7.5" fill="#d2d2d2"/><rect x="1142.0" y="1143.5" width="2.3" height="7.5" fill="#d2d2d2"/><rect x="1179.5" y="1143.5" width="2.3" height="7.5" fill="#d2d2d2"/><rect x="1217.1" y="1143.5" width="2.3" height="7.5" fill="#d2d2d2"/><rect x="1254.7" y="1143.5" width="2.3" height="7.5" fill="#d2d2d2"/><rect x="1292.3" y="1135.5" width="2.4" height="20" fill="#e0e0e0"/><rect x="1329.8" y="1143.5" width="2.3" height="7.5" fill="#d2d2d2"/><rect x="1367.4" y="1143.5" width="2.3" height="7.5" fill="#d2d2d2"/><rect x="1404.9" y="1143.5" width="2.3" height="7.5" fill="#d2d2d2"/><rect x="1442.5" y="1143.5" width="2.3" height="7.5" fill="#d2d2d2"/><rect x="1480.1" y="1143.5" width="2.3" height="7.5" fill="#d2d2d2"/><rect x="1517.7" y="1143.5" width="2.3" height="7.5" fill="#d2d2d2"/><rect x="1555.2" y="1143.5" width="2.3" height="7.5" fill="#d2d2d2"/><rect x="1592.8" y="1143.5" width="2.3" height="7.5" fill="#d2d2d2"/><rect x="1630.4" y="1143.5" width="2.3" height="7.5" fill="#d2d2d2"/><rect x="1668.0" y="1135.5" width="2.4" height="20" fill="#e0e0e0"/><rect x="1705.5" y="1143.5" width="2.3" height="7.5" fill="#d2d2d2"/><rect x="1743.1" y="1143.5" width="2.3" height="7.5" fill="#d2d2d2"/><rect x="1780.6" y="1143.5" width="2.3" height="7.5" fill="#d2d2d2"/><rect x="1818.2" y="1143.5" width="2.3" height="7.5" fill="#d2d2d2"/><rect x="1855.8" y="1143.5" width="2.3" height="7.5" fill="#d2d2d2"/><rect x="1893.4" y="1143.5" width="2.3" height="7.5" fill="#d2d2d2"/><rect x="1930.9" y="1143.5" width="2.3" height="7.5" fill="#d2d2d2"/><rect x="1968.5" y="1143.5" width="2.3" height="7.5" fill="#d2d2d2"/><rect x="2006.1" y="1143.5" width="2.3" height="7.5" fill="#d2d2d2"/><rect x="2043.7" y="1135.5" width="2.4" height="20" fill="#e0e0e0"/><rect x="2081.2" y="1143.5" width="2.3" height="7.5" fill="#d2d2d2"/><rect x="2118.8" y="1143.5" width="2.3" height="7.5" fill="#d2d2d2"/><rect x="2156.3" y="1143.5" width="2.3" height="7.5" fill="#d2d2d2"/><rect x="2193.9" y="1143.5" width="2.3" height="7.5" fill="#d2d2d2"/><rect x="2231.5" y="1143.5" width="2.3" height="7.5" fill="#d2d2d2"/><rect x="2269.0" y="1143.5" width="2.3" height="7.5" fill="#d2d2d2"/><rect x="2306.6" y="1143.5" width="2.3" height="7.5" fill="#d2d2d2"/><rect x="2344.2" y="1143.5" width="2.3" height="7.5" fill="#d2d2d2"/><rect x="2381.8" y="1143.5" width="2.3" height="7.5" fill="#d2d2d2"/><rect x="2419.4" y="1135.5" width="2.4" height="20" fill="#e0e0e0"/><text x="203" y="1178" font-family="DejaVu Sans, Liberation Sans, sans-serif" font-size="17.5" fill="#cfcfcf">1001</text><text x="542.1" y="1178" text-anchor="middle" font-family="DejaVu Sans, Liberation Sans, sans-serif" font-size="17.5" fill="#cfcfcf">1010</text><text x="917.8" y="1178" text-anchor="middle" font-family="DejaVu Sans, Liberation Sans, sans-serif" font-size="17.5" fill="#cfcfcf">1020</text><text x="1293.5" y="1178" text-anchor="middle" font-family="DejaVu Sans, Liberation Sans, sans-serif" font-size="17.5" fill="#cfcfcf">1030</text><text x="1669.2" y="1178" text-anchor="middle" font-family="DejaVu Sans, Liberation Sans, sans-serif" font-size="17.5" fill="#cfcfcf">1040</text><text x="2044.9" y="1178" text-anchor="middle" font-family="DejaVu Sans, Liberation Sans, sans-serif" font-size="17.5" fill="#cfcfcf">1050</text><text x="2420.6" y="1178" text-anchor="middle" font-family="DejaVu Sans, Liberation Sans, sans-serif" font-size="17.5" fill="#cfcfcf">1060</text><rect x="2457" y="1116" width="3.4" height="66" fill="#0c0c0c"/><rect x="407.9" y="1115.0" width="8" height="2.3" fill="#f4901c" opacity="0.95"/><rect x="418.9" y="1115.0" width="8" height="2.3" fill="#f4901c" opacity="0.95"/><rect x="429.9" y="1115.0" width="8" height="2.3" fill="#f4901c" opacity="0.95"/><rect x="440.9" y="1115.0" width="9" height="2.3" fill="#f4901c" opacity="0.95"/><rect x="407.9" y="1119.1" width="8" height="2.3" fill="#f4901c" opacity="0.7"/><rect x="418.9" y="1119.1" width="8" height="2.3" fill="#f4901c" opacity="0.7"/><rect x="429.9" y="1119.1" width="8" height="2.3" fill="#f4901c" opacity="0.7"/><rect x="440.9" y="1119.1" width="9" height="2.3" fill="#f4901c" opacity="0.7"/><rect x="407.9" y="1123.2" width="8" height="2.3" fill="#f4901c" opacity="0.7"/><rect x="418.9" y="1123.2" width="8" height="2.3" fill="#f4901c" opacity="0.7"/><rect x="429.9" y="1123.2" width="8" height="2.3" fill="#f4901c" opacity="0.7"/><rect x="440.9" y="1123.2" width="9" height="2.3" fill="#f4901c" opacity="0.7"/><rect x="407.9" y="1127.3" width="8" height="2.3" fill="#f4901c" opacity="0.95"/><rect x="418.9" y="1127.3" width="8" height="2.3" fill="#f4901c" opacity="0.95"/><rect x="429.9" y="1127.3" width="8" height="2.3" fill="#f4901c" opacity="0.95"/><rect x="440.9" y="1127.3" width="9" height="2.3" fill="#f4901c" opacity="0.95"/><rect x="415.4" y="1131.5" width="27.0" height="2.5" fill="#f4901c"/><rect x="418.4" y="1135.5" width="21.0" height="2.5" fill="#f4901c"/><rect x="421.4" y="1139.5" width="15.0" height="2.5" fill="#f4901c"/><rect x="424.4" y="1143.5" width="9.0" height="2.5" fill="#f4901c"/><rect x="427.4" y="1144" width="3" height="7" fill="#fff0d0"/><rect x="455.0" y="1118.0" width="4" height="1.8" fill="#b0b0b0" opacity="0.6"/><rect x="461.0" y="1118.0" width="4" height="1.8" fill="#b0b0b0" opacity="0.6"/><rect x="467.0" y="1118.0" width="4" height="1.8" fill="#b0b0b0" opacity="0.6"/><rect x="473.0" y="1118.0" width="4" height="1.8" fill="#b0b0b0" opacity="0.6"/><rect x="479.0" y="1118.0" width="4" height="1.8" fill="#b0b0b0" opacity="0.6"/><rect x="485.0" y="1118.0" width="4" height="1.8" fill="#b0b0b0" opacity="0.6"/><rect x="455.0" y="1122.1" width="4" height="1.8" fill="#b0b0b0" opacity="0.6"/><rect x="461.0" y="1122.1" width="4" height="1.8" fill="#b0b0b0" opacity="0.6"/><rect x="467.0" y="1122.1" width="4" height="1.8" fill="#b0b0b0" opacity="0.6"/><rect x="473.0" y="1122.1" width="4" height="1.8" fill="#b0b0b0" opacity="0.6"/><rect x="479.0" y="1122.1" width="4" height="1.8" fill="#b0b0b0" opacity="0.6"/><rect x="485.0" y="1122.1" width="4" height="1.8" fill="#b0b0b0" opacity="0.6"/><rect x="455.0" y="1126.2" width="4" height="1.8" fill="#b0b0b0" opacity="0.6"/><rect x="461.0" y="1126.2" width="4" height="1.8" fill="#b0b0b0" opacity="0.6"/><rect x="467.0" y="1126.2" width="4" height="1.8" fill="#b0b0b0" opacity="0.6"/><rect x="473.0" y="1126.2" width="4" height="1.8" fill="#b0b0b0" opacity="0.6"/><rect x="479.0" y="1126.2" width="4" height="1.8" fill="#b0b0b0" opacity="0.6"/><rect x="485.0" y="1126.2" width="4" height="1.8" fill="#b0b0b0" opacity="0.6"/><rect x="453.5" y="1134" width="25" height="2.4" fill="#c4c4c4"/><rect x="458.0" y="1138" width="16" height="2.4" fill="#c4c4c4"/><rect x="462.0" y="1142" width="8" height="2.4" fill="#e0e0e0"/><rect x="464.6" y="1142" width="2.8" height="9" fill="#f0f0f0"/></svg>
<div class="abs" style="left:94px;top:1118px;width:95px;height:60px;background:#373737;border-radius:5px"></div>
<div class="t" style="left:113.5px;top:1138.0px;font-size:22.0px;color:#999;">1001</div>
<div class="abs" style="left:2470px;top:1118px;width:95px;height:60px;background:#373737;border-radius:5px"></div>
<div class="t" style="left:2490px;top:1138.0px;font-size:22.0px;color:#999;">1060</div>
<svg style="left:2577px;top:1158px" width="18" height="22" viewBox="0 0 18 22"><path d="M1 1 L9 9 L17 1 M1 11 L9 19 L17 11" fill="none" stroke="#a8a8a8" stroke-width="2.6"/></svg>
<div class="t" style="left:93px;top:1200.5px;font-size:22.0px;color:#dcdcdc;">24 fps</div>
<div class="t" style="left:255.5px;top:1200.5px;font-size:22.0px;color:#dcdcdc;">TF</div>
<svg style="left:288.0px;top:1205.0px" width="11" height="7" viewBox="0 0 11 7"><path d="M0 0 H11 L5.5 7 Z" fill="#e4e4e4"/></svg>
<div class="vsep" style="left:313px;top:1190px;height:38px"></div>
<div class="t" style="left:330px;top:1200.5px;font-size:22.0px;color:#dcdcdc;">Global</div>
<svg style="left:425.0px;top:1204.75px" width="12" height="7.5" viewBox="0 0 12 7.5"><path d="M0 0 H12 L6.0 7.5 Z" fill="#e4e4e4"/></svg>
<div class="vsep" style="left:450.5px;top:1190px;height:38px"></div>
<svg style="left:893px;top:1196px" width="40" height="32" viewBox="0 0 40 32"><g fill="none" stroke="#b8b8b8" stroke-width="3.6"><path d="M4 9 H22"/><path d="M27 9 A9.5 9.5 0 0 1 22 26 H13 A9.5 9.5 0 0 1 5 17"/></g><path d="M20 1 L30 9 L20 17 Z" fill="#b8b8b8"/><path d="M28 25 H39 L33.5 31 Z" fill="#e8e8e8"/></svg>
<div class="abs" style="left:947px;top:1188px;width:33px;height:45px;background:linear-gradient(#4c4c4c,#424242);border:2px solid #1c1c1c;border-radius:5px;box-sizing:border-box"></div>
<svg style="left:943.5px;top:1198px" width="40" height="26" viewBox="0 0 40 26"><text x="20" y="21" text-anchor="middle" font-family="DejaVu Sans, Liberation Sans, sans-serif" font-size="21" fill="#c8c8c8">I</text></svg>
<div class="abs" style="left:983px;top:1188px;width:61px;height:45px;background:linear-gradient(#4c4c4c,#424242);border:2px solid #1c1c1c;border-radius:5px;box-sizing:border-box"></div>
<svg style="left:993.5px;top:1198px" width="40" height="26" viewBox="0 0 40 26"><rect x="8" y="2" width="4" height="22" fill="#c8c8c8"/><rect x="13" y="2" width="2.5" height="22" fill="#c8c8c8"/><path d="M33 2 V24 L15.5 13 Z" fill="#c8c8c8"/></svg>
<div class="abs" style="left:1048px;top:1188px;width:60px;height:45px;background:linear-gradient(#4c4c4c,#424242);border:2px solid #1c1c1c;border-radius:5px;box-sizing:border-box"></div>
<svg style="left:1058.0px;top:1198px" width="40" height="26" viewBox="0 0 40 26"><circle cx="9" cy="19" r="3.6" fill="none" stroke="#c8c8c8" stroke-width="2"/><path d="M9 15 V3 M9 6 H13" stroke="#c8c8c8" stroke-width="2" fill="none"/><path d="M34 2 V24 L15 13 Z" fill="#c8c8c8"/></svg>
<div class="abs" style="left:1112.5px;top:1188px;width:60.0px;height:45px;background:linear-gradient(#4c4c4c,#424242);border:2px solid #1c1c1c;border-radius:5px;box-sizing:border-box"></div>
<svg style="left:1122.5px;top:1198px" width="40" height="26" viewBox="0 0 40 26"><path d="M25 2 V24 L7 13 Z" fill="#c8c8c8"/><rect x="27" y="2" width="2.6" height="22" fill="#c8c8c8"/><rect x="30.6" y="2" width="2.2" height="22" fill="#c8c8c8" opacity="0.7"/></svg>
<div class="abs" style="left:1176px;top:1188px;width:61px;height:45px;background:linear-gradient(#4c4c4c,#424242);border:2px solid #1c1c1c;border-radius:5px;box-sizing:border-box"></div>
<svg style="left:1186.5px;top:1198px" width="40" height="26" viewBox="0 0 40 26"><path d="M30 2 V24 L11 13 Z" fill="#c8c8c8"/></svg>
<div class="abs" style="left:1240px;top:1188px;width:97px;height:45px;background:#303030;border-radius:4px"></div>
<div class="t" style="left:1260px;top:1201.0px;font-size:22.0px;color:#d8d8d8;">100<span style="font-size:13px;opacity:.7;position:relative;top:-3px">3</span></div>
<div class="abs" style="left:1340px;top:1188px;width:60px;height:45px;background:linear-gradient(#4c4c4c,#424242);border:2px solid #1c1c1c;border-radius:5px;box-sizing:border-box"></div>
<svg style="left:1350.0px;top:1198px" width="40" height="26" viewBox="0 0 40 26"><rect x="9" y="2" width="22" height="22" rx="3" fill="#c8c8c8"/></svg>
<div class="abs" style="left:1403.5px;top:1188px;width:60.5px;height:45px;background:linear-gradient(#4c4c4c,#424242);border:2px solid #1c1c1c;border-radius:5px;box-sizing:border-box"></div>
<svg style="left:1413.75px;top:1198px" width="40" height="26" viewBox="0 0 40 26"><rect x="9" y="2" width="2.6" height="22" fill="#c8c8c8"/><rect x="7" y="2" width="1.6" height="22" fill="#c8c8c8" opacity="0.6"/><path d="M14 2 V24 L32 13 Z" fill="#c8c8c8"/></svg>
<div class="abs" style="left:1467.5px;top:1188px;width:60.5px;height:45px;background:linear-gradient(#4c4c4c,#424242);border:2px solid #1c1c1c;border-radius:5px;box-sizing:border-box"></div>
<svg style="left:1477.75px;top:1198px" width="40" height="26" viewBox="0 0 40 26"><path d="M6 2 V24 L25 13 Z" fill="#c8c8c8"/><circle cx="31" cy="19" r="3.6" fill="none" stroke="#c8c8c8" stroke-width="2"/><path d="M31 15 V3 M31 6 H35" stroke="#c8c8c8" stroke-width="2" fill="none"/></svg>
<div class="abs" style="left:1531.5px;top:1188px;width:60.5px;height:45px;background:linear-gradient(#4c4c4c,#424242);border:2px solid #1c1c1c;border-radius:5px;box-sizing:border-box"></div>
<svg style="left:1541.75px;top:1198px" width="40" height="26" viewBox="0 0 40 26"><path d="M7 2 V24 L24.5 13 Z" fill="#c8c8c8"/><rect x="25" y="2" width="2.5" height="22" fill="#c8c8c8"/><rect x="28.5" y="2" width="4" height="22" fill="#c8c8c8"/></svg>
<div class="abs" style="left:1595px;top:1188px;width:34px;height:45px;background:linear-gradient(#4c4c4c,#424242);border:2px solid #1c1c1c;border-radius:5px;box-sizing:border-box"></div>
<svg style="left:1592.0px;top:1198px" width="40" height="26" viewBox="0 0 40 26"><text x="20" y="21" text-anchor="middle" font-family="DejaVu Sans, Liberation Sans, sans-serif" font-size="21" fill="#c8c8c8">O</text></svg>
<div class="abs" style="left:1655px;top:1188px;width:41px;height:45px;background:linear-gradient(#4c4c4c,#424242);border:2px solid #1c1c1c;border-radius:5px;box-sizing:border-box"></div>
<svg style="left:1655.5px;top:1198px" width="40" height="26" viewBox="0 0 40 26"><path d="M19 6 V20 L8 13 Z M31 6 V20 L20 13 Z" fill="#c8c8c8"/></svg>
<div class="abs" style="left:1697px;top:1189px;width:44px;height:43px;background:#303030;border:2px solid #1c1c1c;border-radius:5px;box-sizing:border-box"></div>
<div class="t" style="left:1705px;top:1201.0px;font-size:22.0px;color:#d8d8d8;">10</div>
<div class="abs" style="left:1743px;top:1188px;width:42px;height:45px;background:linear-gradient(#4c4c4c,#424242);border:2px solid #1c1c1c;border-radius:5px;box-sizing:border-box"></div>
<svg style="left:1744.0px;top:1198px" width="40" height="26" viewBox="0 0 40 26"><path d="M9 6 V20 L20 13 Z M21 6 V20 L32 13 Z" fill="#c8c8c8"/></svg>
<svg style="left:2291px;top:1198px" width="30" height="24" viewBox="0 0 30 24"><rect width="30" height="24" fill="#c4c4c4"/><path d="M8 4 V20 L24 12 Z" fill="#2b2b2b"/></svg>
<svg style="left:2335px;top:1198px" width="30" height="24" viewBox="0 0 30 24"><rect width="30" height="24" fill="#c4c4c4"/><circle cx="15" cy="12" r="7.5" fill="#2b2b2b"/></svg>
<svg style="left:2381px;top:1193px" width="26" height="30" viewBox="0 0 26 30"><path d="M6 13 V9 A7 7 0 0 1 20 9 V13" fill="none" stroke="#c4c4c4" stroke-width="4"/><rect x="0" y="12" width="26" height="18" rx="1.5" fill="#c4c4c4"/><circle cx="13" cy="19" r="2.6" fill="#2b2b2b"/><rect x="11.8" y="19" width="2.4" height="6" fill="#2b2b2b"/></svg>
<svg style="left:2425px;top:1192px" width="34" height="31" viewBox="0 0 34 31"><path d="M13 0 V17 L23 8.5 Z" fill="#c4c4c4"/><path d="M1 19 V29 H33 V19 M9 23 V29 M17 23 V29 M25 23 V29" fill="none" stroke="#c4c4c4" stroke-width="2.6"/></svg>
<div class="abs" style="left:2470px;top:1189px;width:95px;height:43px;background:#373737;border-radius:5px"></div>
<div class="t" style="left:2503.5px;top:1201.0px;font-size:22.0px;color:#d8d8d8;">60</div>
<!--/TIMELINE-->
<!--NODEGRAPH-->
<svg style="left:92px;top:1249px" width="33" height="33" viewBox="0 0 33 33"><rect width="33" height="33" rx="2" fill="#545454"/><rect width="18" height="19" rx="2" fill="#cacaca"/><rect y="18.5" width="18" height="14.5" fill="#8e8e8e"/></svg>
<div class="abs" style="left:134px;top:1247px;width:219px;height:47px;background:#2e2e2e;border-radius:5px 5px 0 0;box-shadow:-1.5px 0 0 #101010, 1.5px 0 0 #101010"></div>
<div class="abs" style="left:355px;top:1254px;width:227px;height:37px;background:#232323;border-radius:5px 5px 0 0;box-shadow:0 0 0 2px #111"></div>
<div class="abs" style="left:585px;top:1254px;width:211px;height:37px;background:#232323;border-radius:5px 5px 0 0;box-shadow:0 0 0 2px #111"></div>
<div class="t" style="left:156px;top:1259.8px;font-size:22.3px;color:#f0bc78;">Node Graph</div>
<svg style="left:308px;top:1258px" width="24" height="24" viewBox="0 0 24 24"><circle cx="12" cy="12" r="12" fill="#383838"/><path d="M6.5 6.5 L17.5 17.5 M17.5 6.5 L6.5 17.5" stroke="#9a9a9a" stroke-width="3.4"/></svg>
<div class="t" style="left:378px;top:1261.8px;font-size:22.3px;color:#dcdcdc;">Curve Editor</div>
<svg style="left:536px;top:1260px" width="24" height="24" viewBox="0 0 24 24"><circle cx="12" cy="12" r="12" fill="#3c3c3c"/><path d="M6.5 6.5 L17.5 17.5 M17.5 6.5 L6.5 17.5" stroke="#777" stroke-width="3.4"/></svg>
<div class="t" style="left:606.5px;top:1261.8px;font-size:22.3px;color:#dcdcdc;">Dope Sheet</div>
<svg style="left:754px;top:1260px" width="24" height="24" viewBox="0 0 24 24"><circle cx="12" cy="12" r="12" fill="#3c3c3c"/><path d="M6.5 6.5 L17.5 17.5 M17.5 6.5 L6.5 17.5" stroke="#777" stroke-width="3.4"/></svg>
<svg style="left:88px;top:1293px;overflow:hidden" width="2514" height="823" viewBox="88 1293 2514 823" font-family="DejaVu Sans, Liberation Sans, sans-serif"><defs>
<linearGradient id="gGrade" x1="0" y1="0" x2="0" y2="1"><stop offset="0" stop-color="#c4d8fc"/><stop offset="0.5" stop-color="#9db4e4"/><stop offset="1" stop-color="#6680b4"/></linearGradient>
<linearGradient id="gGreen" x1="0" y1="0" x2="0" y2="1"><stop offset="0" stop-color="#b0eeaa"/><stop offset="0.5" stop-color="#86d282"/><stop offset="1" stop-color="#54a652"/></linearGradient>
<linearGradient id="gWhite" x1="0" y1="0" x2="0" y2="1"><stop offset="0" stop-color="#ffffff"/><stop offset="0.5" stop-color="#dcdcdc"/><stop offset="1" stop-color="#9a9a9a"/></linearGradient>
<linearGradient id="gOrange" x1="0" y1="0" x2="0" y2="1"><stop offset="0" stop-color="#f6a468"/><stop offset="0.5" stop-color="#da8850"/><stop offset="1" stop-color="#a85e36"/></linearGradient>
<linearGradient id="gBlue" x1="0" y1="0" x2="0" y2="1"><stop offset="0" stop-color="#5c6ce6"/><stop offset="0.5" stop-color="#4a58cc"/><stop offset="1" stop-color="#3640a0"/></linearGradient>
<linearGradient id="gGray" x1="0" y1="0" x2="0" y2="1"><stop offset="0" stop-color="#f0f0f0"/><stop offset="0.5" stop-color="#cacaca"/><stop offset="1" stop-color="#8c8c8c"/></linearGradient>
<linearGradient id="gRead" x1="0" y1="0" x2="0" y2="1"><stop offset="0" stop-color="#e4e4e4"/><stop offset="0.55" stop-color="#c0c0c0"/><stop offset="1" stop-color="#8a8a8a"/></linearGradient>
<radialGradient id="gDot" cx="0.4" cy="0.35" r="0.7"><stop offset="0" stop-color="#f4f4f4"/><stop offset="0.6" stop-color="#c8c8c8"/><stop offset="1" stop-color="#909090"/></radialGradient>
<linearGradient id="gCorner" x1="0" y1="0" x2="1" y2="1"><stop offset="0.5" stop-color="#fff" stop-opacity="0"/><stop offset="0.5" stop-color="#fff" stop-opacity="0.55"/><stop offset="1" stop-color="#fff" stop-opacity="0.15"/></linearGradient>
</defs><rect x="1915" y="1294" width="383.7" height="748.5" fill="#1f899f"/><path d="M2298.7 2015 V2042.5 H2271 Z" fill="#3a9cb2" opacity="0.6"/><text x="1923" y="1358.5" font-size="64" fill="#000">CleanPlate</text><rect x="721.4" y="1587.6" width="694.7" height="464.4" fill="#bdbdbd"/><rect x="726.5" y="1591.5" width="685" height="22.5" fill="#d6d6d6"/><path d="M1416.1 2025 V2052 H1390 Z" fill="#d6d6d6"/><text x="1070" y="1608" font-size="18.8" fill="#222" text-anchor="middle">BackdropNode3</text><text x="729" y="1680" font-size="64.6" fill="#000">SmartVector</text><path d="M1226 1408 L2602 1408" stroke="#000" stroke-width="3.8" fill="none" /><path d="M1227 1408 L1247 1401.5 L1247 1414.5 Z" fill="#000"/><path d="M2224 1408 L2242 1401.5 L2242 1414.5 Z" fill="#000"/><path d="M1158.5 1430 L1158.5 1760" stroke="#000" stroke-width="3.8" fill="none" /><path d="M1158.5 1770 L1152.0 1750 L1165.0 1750 Z" fill="#000"/><path d="M1158.5 1955 L1158.5 2116" stroke="#000" stroke-width="3.8" fill="none" /><path d="M1158.5 2100 L1151 2113 Q1158.5 2118 1166 2113 Z" fill="#000"/><path d="M2214 1412 L2328 2120" stroke="#0a0a0a" stroke-width="2.8" fill="none" stroke-dasharray="2.8 6.6"/><path d="M2213.5 1408 L2213.5 1490" stroke="#000" stroke-width="3.8" fill="none" /><path d="M2213.5 1498 L2207.5 1480 L2219.5 1480 Z" fill="#000"/><path d="M2010 1512.5 L2140 1512.5" stroke="#000" stroke-width="3.8" fill="none" /><path d="M2011 1512.5 L2028 1506.0 L2028 1519.0 Z" fill="#000"/><path d="M2147 1512.5 L2137 1506.5 L2137 1518.5 Z" fill="#000"/><path d="M1999.5 1512 L1999.5 1555" stroke="#000" stroke-width="3.8" fill="none" /><path d="M1999.5 1569 L1993.25 1550 L2005.75 1550 Z" fill="#000"/><path d="M1999.5 1633 L1993.5 1623 L2005.5 1623 Z" fill="#000"/><path d="M1999.5 1684 L1999.5 1728" stroke="#000" stroke-width="3.8" fill="none" /><path d="M1999.5 1741 L1993.25 1722 L2005.75 1722 Z" fill="#000"/><path d="M2008 1751 L2130 1751" stroke="#000" stroke-width="3.8" fill="none" /><path d="M2147 1751 L2125 1744.5 L2125 1757.5 Z" fill="#000"/><path d="M2213.5 1528 L2213.5 1734" stroke="#000" stroke-width="3.8" fill="none" /><path d="M2213.5 1764 L2213.5 1795" stroke="#000" stroke-width="3.8" fill="none" /><path d="M2213.5 1806 L2207.5 1790 L2219.5 1790 Z" fill="#000"/><path d="M2213.5 1856 L2213.5 1890" stroke="#000" stroke-width="3.8" fill="none" /><path d="M2213.5 1905 L2207.25 1886 L2219.75 1886 Z" fill="#000"/><path d="M2213.5 1969.5 L2207.5 1959.5 L2219.5 1959.5 Z" fill="#000"/><path d="M2213.5 2020 L2213.5 2116" stroke="#000" stroke-width="3.8" fill="none" /><path d="M2213.5 2101 L2206 2114 Q2213.5 2119 2221 2114 Z" fill="#000"/><path d="M2281 1512.5 L2288.5 1506.75 L2288.5 1518.25 Z" fill="#000"/><path d="M2281 1750 L2288.5 1744.25 L2288.5 1755.75 Z" fill="#000"/><path d="M2281 1832 L2288.5 1826.25 L2288.5 1837.75 Z" fill="#000"/><path d="M2281 1932 L2288.5 1926.25 L2288.5 1937.75 Z" fill="#000"/><path d="M2281 1996 L2288.5 1990.25 L2288.5 2001.75 Z" fill="#000"/><path d="M2066.5 1595 L2074.0 1589.25 L2074.0 1600.75 Z" fill="#000"/><path d="M2066.5 1660 L2074.0 1654.25 L2074.0 1665.75 Z" fill="#000"/><path d="M2145.5 1832 L2138.0 1826.25 L2138.0 1837.75 Z" fill="#000"/><circle cx="2213.5" cy="1409" r="8.6" fill="url(#gDot)" stroke="#555" stroke-width="1"/><circle cx="1999.5" cy="1513" r="8.6" fill="url(#gDot)" stroke="#555" stroke-width="1"/><circle cx="1999.5" cy="1751" r="8.6" fill="url(#gDot)" stroke="#555" stroke-width="1"/><rect x="1092.3" y="1383.4" width="132" height="50.2" fill="url(#gGrade)" stroke="#121c30" stroke-width="2.2"/><text x="1158.3" y="1402.4" font-size="16" fill="#14244c" text-anchor="middle" textLength="57" lengthAdjust="spacingAndGlyphs">Grade1</text><text x="1158.3" y="1421.4" font-size="16" fill="#14244c" text-anchor="middle">(rgb / alpha)</text><rect x="1152.5" y="1376" width="11" height="11" fill="#ececec"/><rect x="1097" y="1428" width="12" height="4" fill="#e81010"/><rect x="1110" y="1428" width="12" height="4" fill="#20d820"/><rect x="1123" y="1428" width="12" height="4" fill="#1030e8"/><rect x="1137" y="1428" width="5" height="4" fill="#f4f4f4"/><rect x="1092.5" y="1769" width="132.5" height="32.5" fill="url(#gGray)" stroke="#2a2a2a" stroke-width="2.2"/><text x="1158.75" y="1788.6" font-size="16" fill="#161616" text-anchor="middle" textLength="106" lengthAdjust="spacingAndGlyphs">SmartVector1</text><rect x="1213" y="1794" width="5" height="5" fill="#30a040"/><path d="M1158.5 1813 L1152.0 1802 L1165.0 1802 Z" fill="#000"/><rect x="1092.5" y="1825" width="132.5" height="131" fill="url(#gRead)" stroke="#2a2a2a" stroke-width="2.2"/><rect x="1096" y="1828" width="126" height="72" fill="#000"/><text x="1158" y="1920.5" font-size="16" fill="#161616" text-anchor="middle">Read2</text><text x="1158" y="1941" font-size="16" fill="#161616" text-anchor="middle">Sq001_Shot_0150_vectors_V03.1011.exr</text><path d="M1184 1958 L1236 2100" stroke="#f0b070" stroke-width="2.6" fill="none" stroke-dasharray="2.6 5"/><rect x="1231" y="2105" width="14" height="10" fill="#f8b450"/><rect x="1230.5" y="2098" width="7" height="8" fill="#fbe6c4"/><rect x="2146" y="1497.5" width="133.5" height="32.5" fill="url(#gGreen)" stroke="#163a14" stroke-width="2.2"/><text x="2212.75" y="1517.1" font-size="16" fill="#06280a" text-anchor="middle">RotoPaint1</text><rect x="1932" y="1569" width="134" height="52.5" fill="url(#gWhite)" stroke="#1c2c34" stroke-width="2.2"/><text x="1999.0" y="1589.1" font-size="16" fill="#1c1c1c" text-anchor="middle" textLength="54.5" lengthAdjust="spacingAndGlyphs">Dilate2</text><text x="1999.0" y="1608.1" font-size="16" fill="#1c1c1c" text-anchor="middle" textLength="29.7" lengthAdjust="spacingAndGlyphs">(all)</text><rect x="1932" y="1633.5" width="134" height="52.5" fill="url(#gOrange)" stroke="#3c1c08" stroke-width="2.2"/><text x="1999.0" y="1653.6" font-size="16" fill="#3a1404" text-anchor="middle" textLength="39.5" lengthAdjust="spacingAndGlyphs">Blur2</text><text x="1999.0" y="1672.6" font-size="16" fill="#3a1404" text-anchor="middle" textLength="29.7" lengthAdjust="spacingAndGlyphs">(all)</text><rect x="2146" y="1733" width="133.5" height="32.5" fill="url(#gBlue)" stroke="#0c1040" stroke-width="2.2"/><text x="2212.75" y="1752.6" font-size="16" fill="#080a40" text-anchor="middle" textLength="108.5" lengthAdjust="spacingAndGlyphs">Merge2 (plus)</text><rect x="2208.5" y="1727.5" width="10" height="10" fill="#e8e8e8"/><rect x="2146" y="1805.5" width="133.5" height="52" fill="url(#gGreen)" stroke="#163a14" stroke-width="2.2"/><text x="2212.75" y="1825.4" font-size="16" fill="#06280a" text-anchor="middle" textLength="46" lengthAdjust="spacingAndGlyphs">Roto1</text><text x="2212.75" y="1844.4" font-size="16" fill="#06280a" text-anchor="middle" textLength="54.5" lengthAdjust="spacingAndGlyphs">(alpha)</text><rect x="2146" y="1905" width="133.5" height="53" fill="url(#gWhite)" stroke="#1c2c34" stroke-width="2.2"/><text x="2212.75" y="1925.4" font-size="16" fill="#1c1c1c" text-anchor="middle" textLength="53.5" lengthAdjust="spacingAndGlyphs">Dilate1</text><text x="2212.75" y="1944.4" font-size="16" fill="#1c1c1c" text-anchor="middle" textLength="54.5" lengthAdjust="spacingAndGlyphs">(alpha)</text><rect x="2146" y="1969.5" width="133.5" height="52" fill="url(#gOrange)" stroke="#3c1c08" stroke-width="2.2"/><text x="2212.75" y="1989.4" font-size="16" fill="#3a1404" text-anchor="middle" textLength="39" lengthAdjust="spacingAndGlyphs">Blur1</text><text x="2212.75" y="2008.4" font-size="16" fill="#3a1404" text-anchor="middle" textLength="54.5" lengthAdjust="spacingAndGlyphs">(alpha)</text><path d="M2214 1412 L2328 2120" stroke="#0a0a0a" stroke-width="2.8" fill="none" stroke-dasharray="2.8 6.6" opacity="0.85"/><text x="1149" y="1757" font-size="16" fill="#f4c070" stroke="#f4c070" stroke-width="0.5" opacity="0.85">Src</text><text x="2203" y="1485" font-size="16" fill="#f4c070" stroke="#f4c070" stroke-width="0.5">bg</text><text x="2207" y="1718" font-size="16" fill="#f4c070" stroke="#f4c070" stroke-width="0.5">B</text><text x="2114" y="1763" font-size="16" fill="#f4c070" stroke="#f4c070" stroke-width="0.5">A</text><text x="2205" y="1792" font-size="16" fill="#f4c070" stroke="#f4c070" stroke-width="0.5">bg</text><text x="2202" y="2092" font-size="16" fill="#f4c070" stroke="#f4c070" stroke-width="0.5">Src</text><text x="2316" y="2112" font-size="16" fill="#f4c070" stroke="#f4c070" stroke-width="0.5">2</text><path d="M2602 1991 H2222.5 V2116" fill="none" stroke="#f4f4f4" stroke-width="2.4"/><rect x="2223" y="1992" width="8" height="8" fill="none" stroke="#f4f4f4" stroke-width="1.6"/><g><g fill="none" stroke="#0a0a0a" stroke-width="3.6"><path d="M2407 2009 H2455 Q2457 2009 2457 2012 V2082 Q2457 2085 2454 2085 H2440"/><path d="M2439 2008 V2100"/><path d="M2425 2025 L2438 2095"/><path d="M2384 2030 Q2380 2036 2386 2037 H2438"/><path d="M2386 2064 V2074 Q2386 2078 2390 2078 H2455"/><path d="M2386 2070 H2455"/><path d="M2430 2068 H2455"/><path d="M2405 2028 H2438"/></g><rect x="2432" y="1993" width="18.5" height="16.5" fill="#e06068"/><rect x="2435" y="1996" width="9" height="9" fill="#f4e0e0"/><rect x="2438" y="1999" width="3" height="7" fill="#c05058"/><rect x="2389.5" y="2013.5" width="38.5" height="10" fill="#6a5a5a" stroke="#f6cccc" stroke-width="2.6"/><rect x="2393" y="2015.5" width="6" height="6" fill="#5a5050"/><rect x="2402" y="2015.5" width="5" height="6" fill="#d8c0a8"/><rect x="2411" y="2015.5" width="12" height="6" fill="#586078"/><rect x="2368" y="2019" width="16" height="13" fill="#6a70d0"/><rect x="2370" y="2021" width="4" height="3" fill="#d0d4f8"/><rect x="2376" y="2021" width="6" height="3" fill="#d0d4f8"/><rect x="2370" y="2027" width="5" height="3" fill="#c0c4f0"/><path d="M2377 2030 L2383 2022" stroke="#2830a0" stroke-width="2"/><rect x="2378" y="2045" width="17.5" height="19" fill="#e06068"/><rect x="2381.5" y="2048" width="10.5" height="11" fill="#f4e4e4"/><rect x="2385" y="2052" width="3.4" height="9" fill="#7a4a4a"/><rect x="2453" y="2059" width="6" height="8" rx="2" fill="#38a848"/><rect x="2411" y="2030" width="6" height="6" fill="#28b8d8"/><path d="M2404 2022 L2438 2110" stroke="#f0bc7a" stroke-width="2.6"/><rect x="2438" y="2094" width="6.5" height="11" fill="#e05058"/></g><rect x="88" y="2114.4" width="2514" height="2" fill="#1c1c1c"/></svg>
<svg style="left:1390px;top:1278px" width="30" height="44" viewBox="-4 -4 30 44"><path d="M0 0 V30 L7 23.5 L12.5 36 L17.5 33.8 L12 21.5 L21.5 21.5 Z" fill="#f8f8f8" stroke="#111" stroke-width="2.2" stroke-linejoin="round"/></svg>
<!--/NODEGRAPH-->
</div>
</body>
</html>
